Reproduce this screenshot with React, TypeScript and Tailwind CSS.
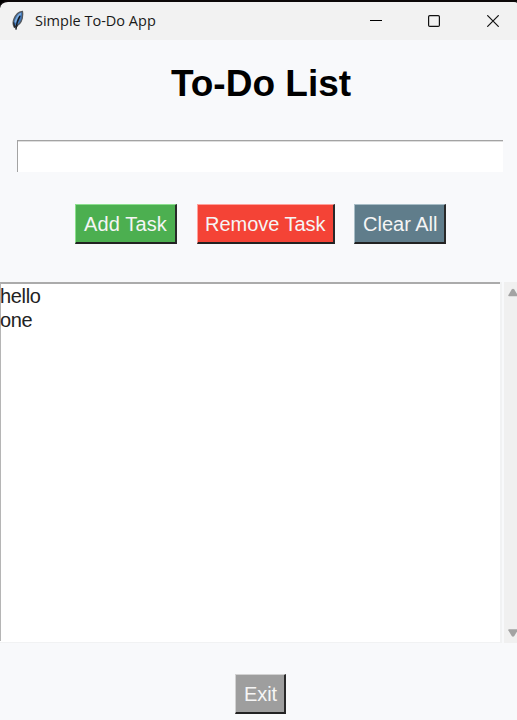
import type { ReactNode } from "react";

function Feather() {
  return (
    <svg className="ml-[11px] h-[22px] w-[14px]" viewBox="0 0 14 22" fill="none">
      <path d="M11.4 1.4C7.8 1.8 4.6 5 3 9C1.8 12 1.9 14.6 3.2 17C7.4 15.8 10.2 12.6 11.2 8.4C11.8 5.6 11.9 3.2 11.4 1.4Z" fill="#3f78bd" stroke="#55595e" strokeWidth="1.4" />
      <path d="M9.8 3.4C7.4 5.4 5 9 4.4 12.6" stroke="#83b0de" strokeWidth="1.5" />
      <path d="M9 5.8C6.9 9.4 5.4 13.4 4.9 19.6" stroke="#16191e" strokeWidth="1.4" />
      <path d="M2.6 12.4L3.8 17L6.6 15.6" stroke="#24282d" strokeWidth="1.3" />
    </svg>
  );
}

function TitleBar() {
  return (
    <div className="h-10 shrink-0 bg-black">
      <div className="flex h-10 items-center rounded-tl-lg rounded-tr-[3px] border-t-2 border-t-[#0c0809] bg-[#f2f2f2]">
        <Feather />
        <span className="ml-[10px] w-[330px] whitespace-nowrap font-['Open_Sans','Noto_Sans',sans-serif] text-[14.5px] tracking-[0px] text-[#191919]">
          Simple To-Do App
        </span>
        <svg className="ml-[5px] h-3 w-3 shrink-0" viewBox="0 0 12 12">
          <path d="M0 5.5H12" stroke="#000" strokeWidth="1" />
        </svg>
        <svg className="ml-[46px] h-3 w-3 shrink-0" viewBox="0 0 12 12" fill="none">
          <rect x="0.6" y="0.6" width="10.8" height="10.8" rx="1.2" stroke="#111" strokeWidth="1.2" />
        </svg>
        <svg className="ml-[47px] h-3 w-3 shrink-0" viewBox="0 0 12 12">
          <path d="M0.3 0.3L11.7 11.7M11.7 0.3L0.3 11.7" stroke="#111" strokeWidth="1.2" />
        </svg>
      </div>
    </div>
  );
}

function Button({ className, children }: { className: string; children: ReactNode }) {
  return (
    <button
      className={`flex h-10 shrink-0 items-center justify-start whitespace-nowrap border-t border-r-2 border-b-2 border-l border-r-[#292929] border-b-[#222222] text-[20px] leading-6 text-[#f5f5f5] ${className}`}
    >
      {children}
    </button>
  );
}

const tasks = ["hello", "one"];

export default function App() {
  return (
    <div className="flex h-[720px] w-[517px] flex-col overflow-hidden bg-[#f8f9fb] font-['Liberation_Sans',Arial,sans-serif]">
      <TitleBar />
      <h1 className="mt-[22px] ml-[5px] h-11 text-center text-[37px] leading-[44px] font-bold text-black">
        To-Do List
      </h1>
      <input
        aria-label="New task"
        className="mt-[34px] ml-[17px] h-[32px] w-[486px] shrink-0 border-t border-l border-[#a3a3a3] bg-white px-1 text-[20px] shadow-[inset_0_1px_0_#dedede] outline-none"
      />
      <div className="mt-8 ml-[75px] flex h-10 shrink-0">
        <Button className="w-[102px] border-t-[#8cdf8e] border-l-[#8cdf8e] bg-[#4caf50] pl-2 tracking-[0.13px]">Add Task</Button>
        <Button className="ml-5 w-[138px] border-t-[#ffa19b] border-l-[#ffa19b] bg-[#f44336] pl-[7px] tracking-[-0.02px]">Remove Task</Button>
        <Button className="ml-[19px] w-[92px] border-t-[#a8bdc6] border-l-[#a8bdc6] bg-[#607d8b] pl-2 tracking-[0px]">Clear All</Button>
      </div>
      <div className="mt-[38px] flex h-[361px] shrink-0">
        <div className="w-[502px] border-r-2 border-b border-[#f1f2f3] bg-white">
          <ul className="h-[359px] border-t-2 border-l border-t-[#ababab] border-l-[#b5b5b5] text-[20px] leading-6 text-[#222222]">
            {tasks.map((task) => (
              <li key={task} className="-ml-px h-6 tracking-[-0.35px]">{task}</li>
            ))}
          </ul>
        </div>
        <div className="ml-[2px] flex w-[13px] flex-col justify-between overflow-hidden bg-[#f0f0f0] pt-[6px] pb-[5px] pl-1">
          <svg className="h-[9px] w-[10px] shrink-0" viewBox="0 0 10 9">
            <path d="M0.3 7.2L3.7 1.4Q5 0 6.3 1.4L9.7 7.2Q10 8.2 9 8.2H1Q0 8.2 0.3 7.2Z" fill="#a3a3a3" />
          </svg>
          <svg className="h-[9px] w-[10px] shrink-0" viewBox="0 0 10 9">
            <path d="M0.3 1.2L3.7 7Q5 8.4 6.3 7L9.7 1.2Q10 0.2 9 0.2H1Q0 0.2 0.3 1.2Z" fill="#a3a3a3" />
          </svg>
        </div>
      </div>
      <div className="mt-[31px] ml-[235px] flex h-10 shrink-0">
        <Button className="w-[51px] border-t-[#d2d2d2] border-l-[#d2d2d2] bg-[#9e9e9e] pl-2 tracking-[-0.1px]">Exit</Button>
      </div>
    </div>
  );
}
